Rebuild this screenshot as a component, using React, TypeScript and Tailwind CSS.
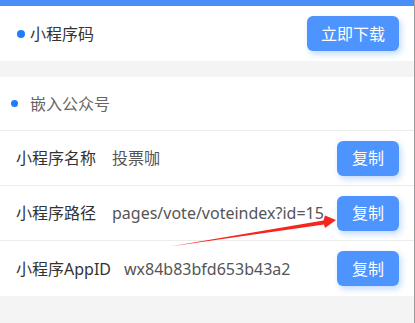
import React from 'react';

const rows = [
  { label: '小程序名称', value: '投票咖', gap: 'ml-4' },
  { label: '小程序路径', value: 'pages/vote/voteindex?id=15', gap: 'ml-4' },
  { label: '小程序AppID', value: 'wx84b83bfd653b43a2', gap: 'ml-[13px]' },
];

function Btn({ children, wide }: { children: React.ReactNode; wide?: boolean }) {
  return (
    <button
      className={`${wide ? 'w-[92px]' : 'w-[62px]'} h-[35px] shrink-0 rounded-[6px] bg-[#4e94ff] text-[16px] text-white shadow-[2px_3px_6px_rgba(78,148,255,0.35)]`}
    >
      {children}
    </button>
  );
}

export default function App() {
  return (
    <div
      className="relative flex h-[323px] w-[415px] overflow-hidden bg-[#f4f4f4] text-[16px] text-[#333]"
      style={{ fontFamily: '"Noto Sans", "Noto Sans CJK SC", sans-serif' }}
    >
      <div className="flex flex-1 flex-col">
        <div className="h-[6px] bg-[#4a8ef9]" />

        <div className="flex h-[55px] items-center bg-white pl-[17px] pr-[15px]">
          <span className="h-[8px] w-[8px] rounded-full bg-[#1e7cff]" />
          <span className="ml-[5px] flex-1">小程序码</span>
          <Btn wide>立即下载</Btn>
        </div>

        <div className="h-[16px]" />

        <div className="flex flex-col bg-white">
          <div className="flex h-[54px] items-center border-b border-[#ececec] pl-[11px]">
            <span className="h-[7px] w-[7px] rounded-full bg-[#1e7cff]" />
            <span className="ml-[12px] text-[#666]">嵌入公众号</span>
          </div>
          {rows.map((r, i) => (
            <div
              key={r.label}
              className={`flex h-[55px] items-center pl-[16px] pr-[15px] ${i < rows.length - 1 ? 'border-b border-[#ececec]' : ''}`}
            >
              <span className="shrink-0">{r.label}</span>
              <span className={`${r.gap} mr-[9px] flex-1 overflow-hidden whitespace-nowrap text-[#555]`}>{r.value}</span>
              <Btn>复制</Btn>
            </div>
          ))}
        </div>
      </div>
      <div className="w-[1px] bg-[#9a9a9a]" />

      <svg className="pointer-events-none absolute left-0 top-0" width="415" height="323">
        <polygon points="170,246.5 324,224.5 325,228 336,220 325,215.5 323.5,220.5" fill="#f5261b" />
      </svg>
    </div>
  );
}
